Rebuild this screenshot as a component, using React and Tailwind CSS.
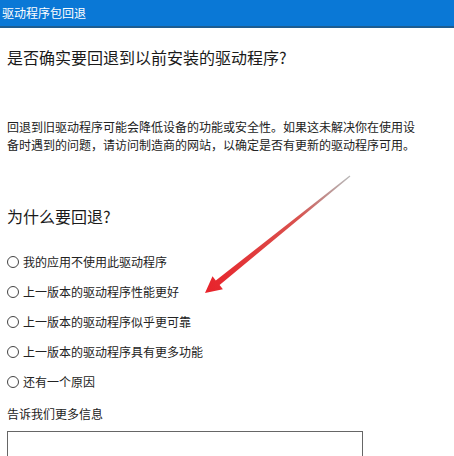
const reasons = [
  "我的应用不使用此驱动程序",
  "上一版本的驱动程序性能更好",
  "上一版本的驱动程序似乎更可靠",
  "上一版本的驱动程序具有更多功能",
  "还有一个原因",
];

function Radio({ label }) {
  return (
    <label className="flex h-[30px] items-center gap-[4px]">
      <span className="h-[12px] w-[12px] rounded-full border border-[#444] bg-white" />
      <span className="text-[12px] leading-[18px] text-[#222]">{label}</span>
    </label>
  );
}

// red pointer drawn over the dialog
function Arrow() {
  return (
    <svg
      className="pointer-events-none absolute left-0 top-0"
      width="454"
      height="456"
      viewBox="0 0 454 456"
    >
      <defs>
        <linearGradient id="shaft" x1="350" y1="176" x2="205" y2="293" gradientUnits="userSpaceOnUse">
          <stop offset="0" stopColor="#8a8a8a" stopOpacity="0.6" />
          <stop offset="0.35" stopColor="#d9534f" />
          <stop offset="1" stopColor="#e8222a" />
        </linearGradient>
      </defs>
      <polygon
        points="350.4,176.5 219.6,285.1 222.9,289.3 205,293 212.5,276.3 215.8,280.5 349.6,175.5"
        fill="url(#shaft)"
      />
    </svg>
  );
}

export default function App() {
  return (
    <div
      className="relative h-[456px] w-[454px] overflow-hidden bg-white"
      style={{ fontFamily: '"Noto Sans CJK SC", "Noto Sans", sans-serif' }}
    >
      <div className="flex h-[28px] items-center border-b-2 border-[#1d5d91] bg-[#0a78d6] pl-[2px]">
        <span className="text-[12px] text-white">驱动程序包回退</span>
      </div>

      <div className="px-[7px]">
        <h1 className="mt-[17px] text-[16px] leading-[24px] text-[#1a1a1a]">
          是否确实要回退到以前安装的驱动程序?
        </h1>

        <p className="mt-[49px] w-[410px] text-[12px] leading-[18px] text-[#222]">
          回退到旧驱动程序可能会降低设备的功能或安全性。如果这未解决你在使用设备时遇到的问题，请访问制造商的网站，以确定是否有更新的驱动程序可用。
        </p>

        <h2 className="mt-[51px] text-[16px] leading-[22px] text-[#1a1a1a]">为什么要回退?</h2>

        <div className="mt-[20px] flex flex-col">
          {reasons.map((r) => (
            <Radio key={r} label={r} />
          ))}
        </div>

        <div className="mt-[8px] text-[12px] leading-[18px] text-[#222]">告诉我们更多信息</div>
        <div className="mt-[8px] h-[60px] w-[356px] border border-[#666] bg-white" />
      </div>

      <Arrow />
    </div>
  );
}
